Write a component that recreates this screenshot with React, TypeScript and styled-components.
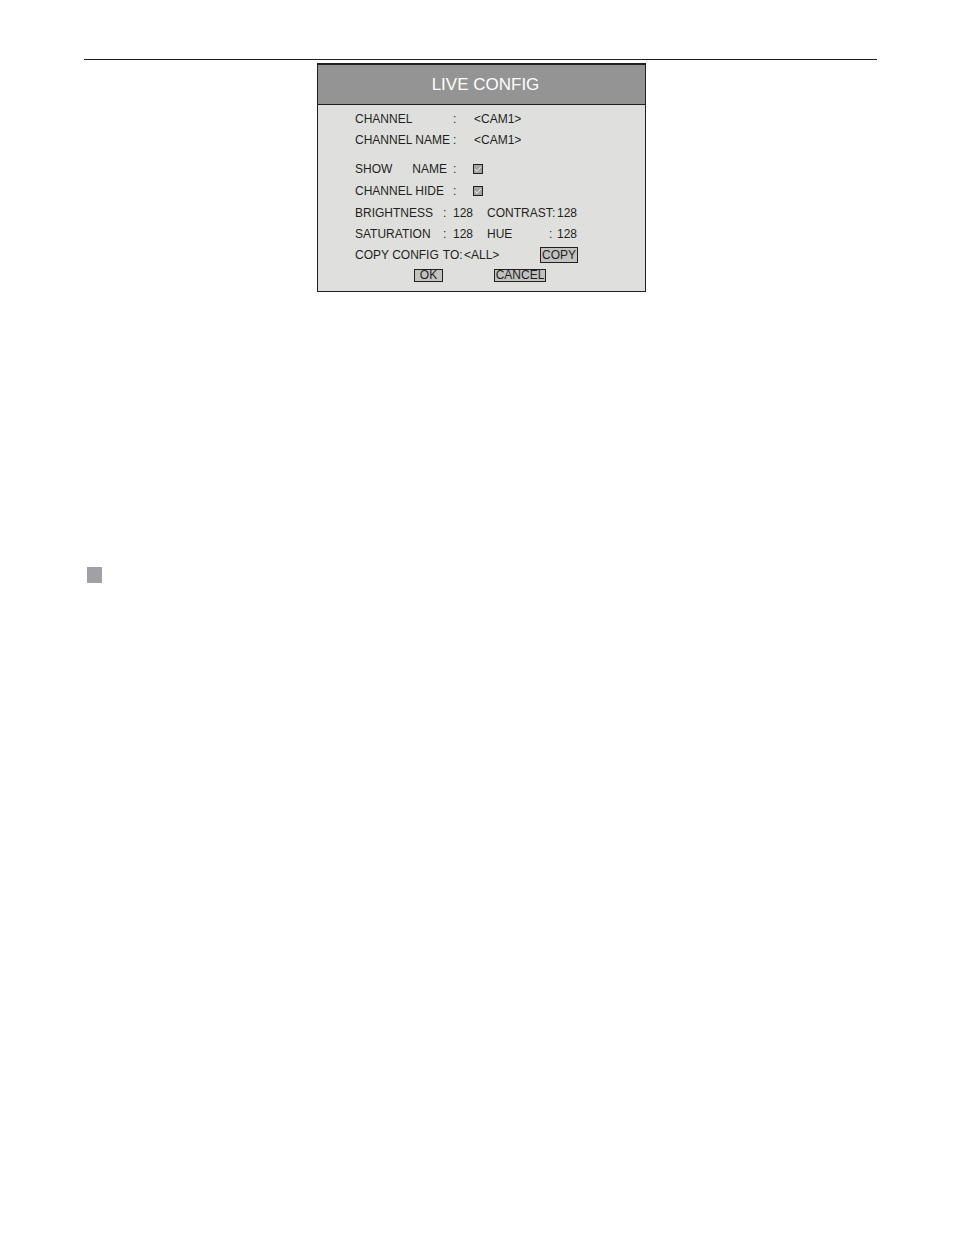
import React, { useId, useState } from "react";
import styled, { createGlobalStyle } from "styled-components";

const GlobalStyle = createGlobalStyle`
  *, *::before, *::after { box-sizing: border-box; }
  body {
    margin: 0;
    background: #fff;
    color: #231f20;
    font-family: "Liberation Sans", Arial, sans-serif;
    font-size: 12px;
    line-height: 14px;
  }
`;

const Page = styled.main`
  padding: 59px 77px 40px 84px;
`;

const Rule = styled.hr`
  margin: 0 0 3px;
  border: 0;
  border-top: 1px solid #231f20;
`;

const Figure = styled.section`
  padding-left: 2px;
`;

const Dialog = styled.form`
  width: 100%;
  max-width: 329px;
  margin: 0 auto;
  border: 1px solid #231f20;
  border-top-width: 2px;
  background: #dfdfdd;
`;

const Title = styled.h1`
  margin: 0;
  padding: 10px 0 9px 8px;
  border-bottom: 1px solid #231f20;
  background: #949494;
  color: #fff;
  font-size: 17px;
  font-weight: 400;
  line-height: 20px;
  text-align: center;
`;

const Body = styled.div`
  padding: 3px 0 5px 37px;
`;

const Group = styled.div`
  & + & { margin-top: 8px; }
`;

const Row = styled.div<{ $tall?: boolean }>`
  display: flex;
  align-items: center;
  height: ${(p) => (p.$tall ? 22 : 21)}px;
`;

const Label = styled.label<{ $width: number; $gap?: number }>`
  display: flex;
  gap: ${(p) => p.$gap ?? 0}px;
  flex: none;
  width: ${(p) => p.$width}px;
  white-space: nowrap;
`;

const Colon = styled.span<{ $width: number }>`
  flex: none;
  width: ${(p) => p.$width}px;
`;

const Select = styled.select`
  appearance: none;
  width: 60px;
  margin: 0;
  padding: 0;
  border: 0;
  background: transparent;
  color: inherit;
  font: inherit;
`;

const NumberBox = styled.input`
  flex: none;
  width: 34px;
  height: 14px;
  margin: 0;
  padding: 0;
  border: 0;
  background: transparent;
  color: inherit;
  font: inherit;
`;

const CheckFrame = styled.span`
  display: grid;
  width: 10px;
  height: 10px;
  & > * { grid-area: 1 / 1; }
`;

const CheckInput = styled.input`
  appearance: none;
  width: 10px;
  height: 10px;
  margin: 0;
  border: 1px solid #231f20;
  background: #a4a4a4;
`;

const CheckMark = styled.svg`
  width: 10px;
  height: 10px;
  pointer-events: none;
  z-index: 1;
`;

const Button = styled.button<{ $width: number; $tall?: boolean }>`
  width: ${(p) => p.$width}px;
  height: ${(p) => (p.$tall ? 16 : 13)}px;
  padding: 0;
  border: 1px solid #231f20;
  border-radius: 0;
  background: #c2c2c1;
  color: inherit;
  font: inherit;
  line-height: ${(p) => (p.$tall ? 14 : 11)}px;
  text-align: center;
`;

const CopyTarget = styled.div`
  width: 76px;
`;

const Actions = styled(Row)`
  gap: 51px;
  padding-left: 59px;
`;

const Marker = styled.div`
  width: 15px;
  height: 16px;
  margin: 275px 0 0 3px;
  background: #9fa1a4;
`;

function SelectRow({ label, value }: { label: string; value: string }) {
  const id = useId();
  return (
    <Row>
      <Label htmlFor={id} $width={98}>{label}</Label>
      <Colon $width={21}>:</Colon>
      <Select id={id} defaultValue={value}>
        <option>{value}</option>
      </Select>
    </Row>
  );
}

function CheckRow({ words, gap }: { words: string[]; gap?: number }) {
  const id = useId();
  const [on, setOn] = useState(true);
  return (
    <Row $tall>
      <Label htmlFor={id} $width={98} $gap={gap}>
        {words.map((word) => <span key={word}>{word}</span>)}
      </Label>
      <Colon $width={20}>:</Colon>
      <CheckFrame>
        <CheckInput id={id} type="checkbox" checked={on} onChange={() => setOn(!on)} />
        {on && (
          <CheckMark viewBox="0 0 10 10" fill="none" stroke="#e8e8e8" aria-hidden="true">
            <path d="M2 5 4 7.5 8 2.5" />
          </CheckMark>
        )}
      </CheckFrame>
    </Row>
  );
}

interface LevelProps {
  label: string;
  labelWidth: number;
  colonWidth: number;
}

function Level({ label, labelWidth, colonWidth }: LevelProps) {
  const id = useId();
  return (
    <>
      <Label htmlFor={id} $width={labelWidth}>{label}</Label>
      <Colon $width={colonWidth}>:</Colon>
      <NumberBox id={id} inputMode="numeric" defaultValue="128" />
    </>
  );
}

export default function App() {
  return (
    <>
      <GlobalStyle />
      <Page>
        <Rule />
        <Figure>
          <Dialog onSubmit={(e: React.FormEvent) => e.preventDefault()}>
            <Title>LIVE CONFIG</Title>
            <Body>
              <Group>
                <SelectRow label="CHANNEL" value="<CAM1>" />
                <SelectRow label="CHANNEL NAME" value="<CAM1>" />
              </Group>
              <Group>
                <CheckRow words={["SHOW", "NAME"]} gap={20} />
                <CheckRow words={["CHANNEL HIDE"]} />
                <Row>
                  <Level label="BRIGHTNESS" labelWidth={88} colonWidth={10} />
                  <Level label="CONTRAST" labelWidth={65} colonWidth={5} />
                </Row>
                <Row>
                  <Level label="SATURATION" labelWidth={88} colonWidth={10} />
                  <Level label="HUE" labelWidth={62} colonWidth={8} />
                </Row>
                <Row>
                  <Label htmlFor="copy-to" $width={109} $gap={4}>
                    <span>COPY CONFIG</span>
                    <span>TO:</span>
                  </Label>
                  <CopyTarget>
                    <Select id="copy-to" defaultValue="<ALL>">
                      <option>{"<ALL>"}</option>
                    </Select>
                  </CopyTarget>
                  <Button type="button" $width={38} $tall>COPY</Button>
                </Row>
                <Actions>
                  <Button type="submit" $width={29}>OK</Button>
                  <Button type="button" $width={52}>CANCEL</Button>
                </Actions>
              </Group>
            </Body>
          </Dialog>
        </Figure>
        <Marker />
      </Page>
    </>
  );
}
